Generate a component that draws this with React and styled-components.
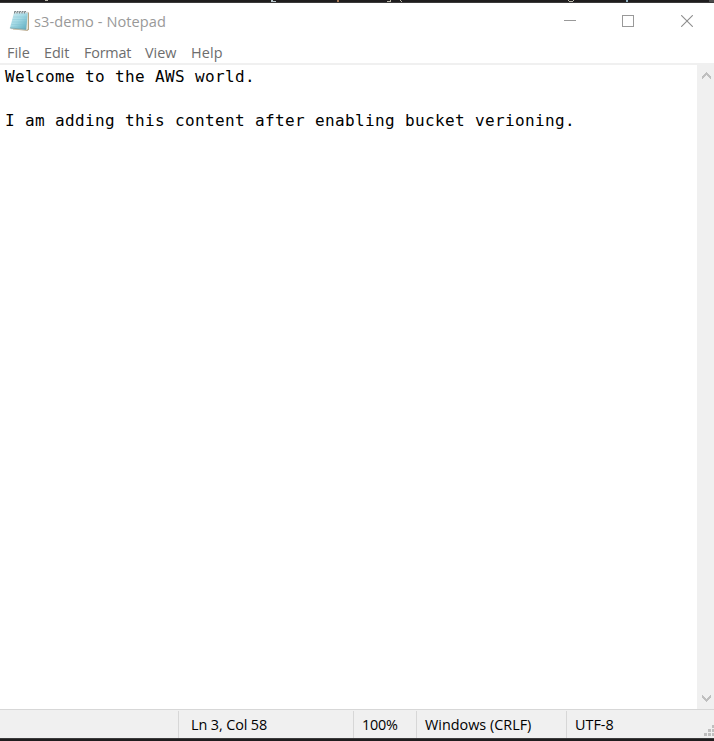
import React from "react";
import styled, { createGlobalStyle } from "styled-components";

const GlobalStyle = createGlobalStyle`
  * { box-sizing: border-box; }
  body { margin: 0; background: #fff; overflow: hidden; }
`;

const Screen = styled.div`
  width: 714px;
  height: 741px;
  display: grid;
  grid-template-rows: 3px 39px 21px 2px 644px 29px 3px;
  overflow: hidden;
  background: #fff;
  font-family: "Open Sans", "Noto Sans", sans-serif;
  font-size: 14.4px;
`;

const Backdrop = styled.div`
  background: #1f1d1e;
  border-top: ${(p) => (p.$below ? "1px solid #3b3b3c" : "none")};
  border-bottom: ${(p) => (p.$below ? "none" : "1px solid #3b3a3b")};
  svg { display: block; }
`;

const TitleBar = styled.header`
  display: flex;
  align-items: flex-start;
  background: #fff;
`;

const TitleIcon = styled.svg`
  margin: 7px 0 0 9px;
  flex: none;
`;

const Title = styled.div`
  margin: 7px 0 0 4px;
  line-height: 22px;
  font-size: 14.6px;
  letter-spacing: 0.07px;
  color: #999;
  white-space: pre;
`;

const Controls = styled.div`
  display: flex;
  margin-left: auto;
  height: 36px;
`;

const ControlButton = styled.button`
  width: ${(p) => p.$width}px;
  padding: 0;
  border: 0;
  background: none;
  display: grid;
  place-items: center;
`;

const MenuBar = styled.nav`
  display: flex;
  padding-left: 7px;
  color: #6d6d6d;
  line-height: 21px;
`;

const MenuItem = styled.span`
  width: ${(p) => p.$width}px;
  letter-spacing: ${(p) => p.$spacing || 0}px;
  white-space: pre;
`;

const Rule = styled.div`
  background: #f0f0f0;
`;

const Editor = styled.main`
  display: grid;
  grid-template-columns: 1fr 17px;
`;

const Document = styled.pre`
  margin: 0;
  padding: 1px 0 0 5px;
  font-family: "DejaVu Sans Mono", monospace;
  font-size: 16px;
  letter-spacing: 0.367px;
  line-height: 22px;
  color: #000;
`;

const ScrollBar = styled.div`
  display: flex;
  flex-direction: column;
  justify-content: space-between;
  align-items: center;
  padding: 7px 0 7px 2px;
  background: #f0f0f0;
`;

const StatusBar = styled.footer`
  display: grid;
  grid-template-columns: 178px 175px 63px 150px 1fr;
  background: #f0f0f0;
  border-top: 1px solid #d7d7d7;
  position: relative;
`;

const StatusCell = styled.div`
  margin: 1px 0 2px;
  padding-left: ${(p) => p.$pad}px;
  border-left: ${(p) => (p.$first ? "none" : "1px solid #d7d7d7")};
  line-height: 27px;
  letter-spacing: ${(p) => p.$spacing || 0}px;
  color: #000;
  white-space: pre;
`;

const ResizeGrip = styled.svg`
  position: absolute;
  right: 0;
  bottom: 2px;
`;

const NotepadIcon = () => (
  <TitleIcon width="21" height="25" viewBox="0 0 21 25">
    <defs>
      <linearGradient id="cover" x1="0" y1="0" x2="1" y2="1">
        <stop offset="0" stopColor="#cfeaf0" />
        <stop offset="0.45" stopColor="#a5dae5" />
        <stop offset="1" stopColor="#58a9bd" />
      </linearGradient>
    </defs>
    <path d="M6 2.5H20V19.5L18.5 20.8L4 19.5Z" fill="#a89470" />
    <path d="M5 2.5H19.2V19L17.8 20L2 19.2Z" fill="#e6e2d2" />
    <path d="M5 3H18.8L17.2 19.4L.9 18Z" fill="url(#cover)" />
    <path d="M4.2 7H18M3.6 9.5H17.8M3.1 12H17.5M2.5 14.5H17.3M2 17H17" stroke="#7bbfce" strokeWidth=".5" opacity=".65" />
    <path d="M.9 18L17.2 19.4" stroke="#729fa9" strokeWidth=".8" />
    <path d="M5.2 2.5H19" stroke="#d0d7d8" strokeWidth="1.5" />
    <path d="M5.5 3.5V1.5H7M8 3.5V1.5H9.5M10.5 3.5V1.5H12M13 3.5V1.5H14.5M15.5 3.5V1.5H17" fill="none" stroke="#707d80" strokeWidth=".9" />
  </TitleIcon>
);

const Arrow = ({ down }) => (
  <svg width="9" height="7" viewBox="0 0 9 7" shapeRendering="crispEdges">
    <path
      transform={down ? "translate(0 7) scale(1 -1)" : undefined}
      d="M4 0H5V1H6V2H7V3H8V4H9V7H8V6H7V5H6V4H5V3H4V4H3V5H2V6H1V7H0V4H1V3H2V2H3V1H4Z"
      fill="#bfbfbf"
    />
  </svg>
);

export default function App() {
  return (
    <>
      <GlobalStyle />
      <Screen>
        <Backdrop>
          <svg width="714" height="2" shapeRendering="crispEdges">
            <path d="M45 0h3M387 1h4M390 0h1M400 0h1M401 1h1M568 0h1M569 1h4M573 0h1" stroke="#b9b6a8" />
            <path d="M271 0h2v1h3v1h-5Z" fill="#b8c5ca" />
            <path d="M337 0h2v2h-2Z" fill="#a57855" />
            <path d="M626 0h2v2h-2Z" fill="#92b3c5" />
            <path d="M709 0h5v2h-5Z" fill="#4c4c4c" />
          </svg>
        </Backdrop>
        <TitleBar>
          <NotepadIcon />
          <Title>s3-demo - Notepad</Title>
          <Controls>
            <ControlButton $width={52} aria-label="Minimize">
              <svg width="12" height="12" shapeRendering="crispEdges"><path d="M0 5.5H12" stroke="#999" /></svg>
            </ControlButton>
            <ControlButton $width={64} aria-label="Maximize">
              <svg width="12" height="12" shapeRendering="crispEdges"><path d="M.5 .5H11.5V11.5H.5Z" fill="none" stroke="#999" /></svg>
            </ControlButton>
            <ControlButton $width={54} aria-label="Close">
              <svg width="12" height="12"><path d="M.2 .2L11.8 11.8M11.8 .2L.2 11.8" stroke="#8d8d8d" strokeWidth="1.1" /></svg>
            </ControlButton>
          </Controls>
        </TitleBar>
        <MenuBar>
          <MenuItem $width={37}>File</MenuItem>
          <MenuItem $width={40} $spacing={-0.1}>Edit</MenuItem>
          <MenuItem $width={61} $spacing={-0.2}>Format</MenuItem>
          <MenuItem $width={46}>View</MenuItem>
          <MenuItem $width={40} $spacing={0.15}>Help</MenuItem>
        </MenuBar>
        <Rule />
        <Editor>
          <Document>{"Welcome to the AWS world.\n\nI am adding this content after enabling bucket verioning."}</Document>
          <ScrollBar><Arrow /><Arrow down /></ScrollBar>
        </Editor>
        <StatusBar>
          <StatusCell $first />
          <StatusCell $pad={12} $spacing={-0.1}>Ln 3, Col 58</StatusCell>
          <StatusCell $pad={8} $spacing={-0.25}>100%</StatusCell>
          <StatusCell $pad={8}>Windows (CRLF)</StatusCell>
          <StatusCell $pad={8}>UTF-8</StatusCell>
          <ResizeGrip width="10" height="11" shapeRendering="crispEdges">
            <path d="M8 0h2v3h-2ZM4 4h3v3h-3ZM8 4h2v3h-2ZM0 8h3v3h-3ZM4 8h3v3h-3ZM8 8h2v3h-2Z" fill="#bfbfbf" />
          </ResizeGrip>
        </StatusBar>
        <Backdrop $below />
      </Screen>
    </>
  );
}
